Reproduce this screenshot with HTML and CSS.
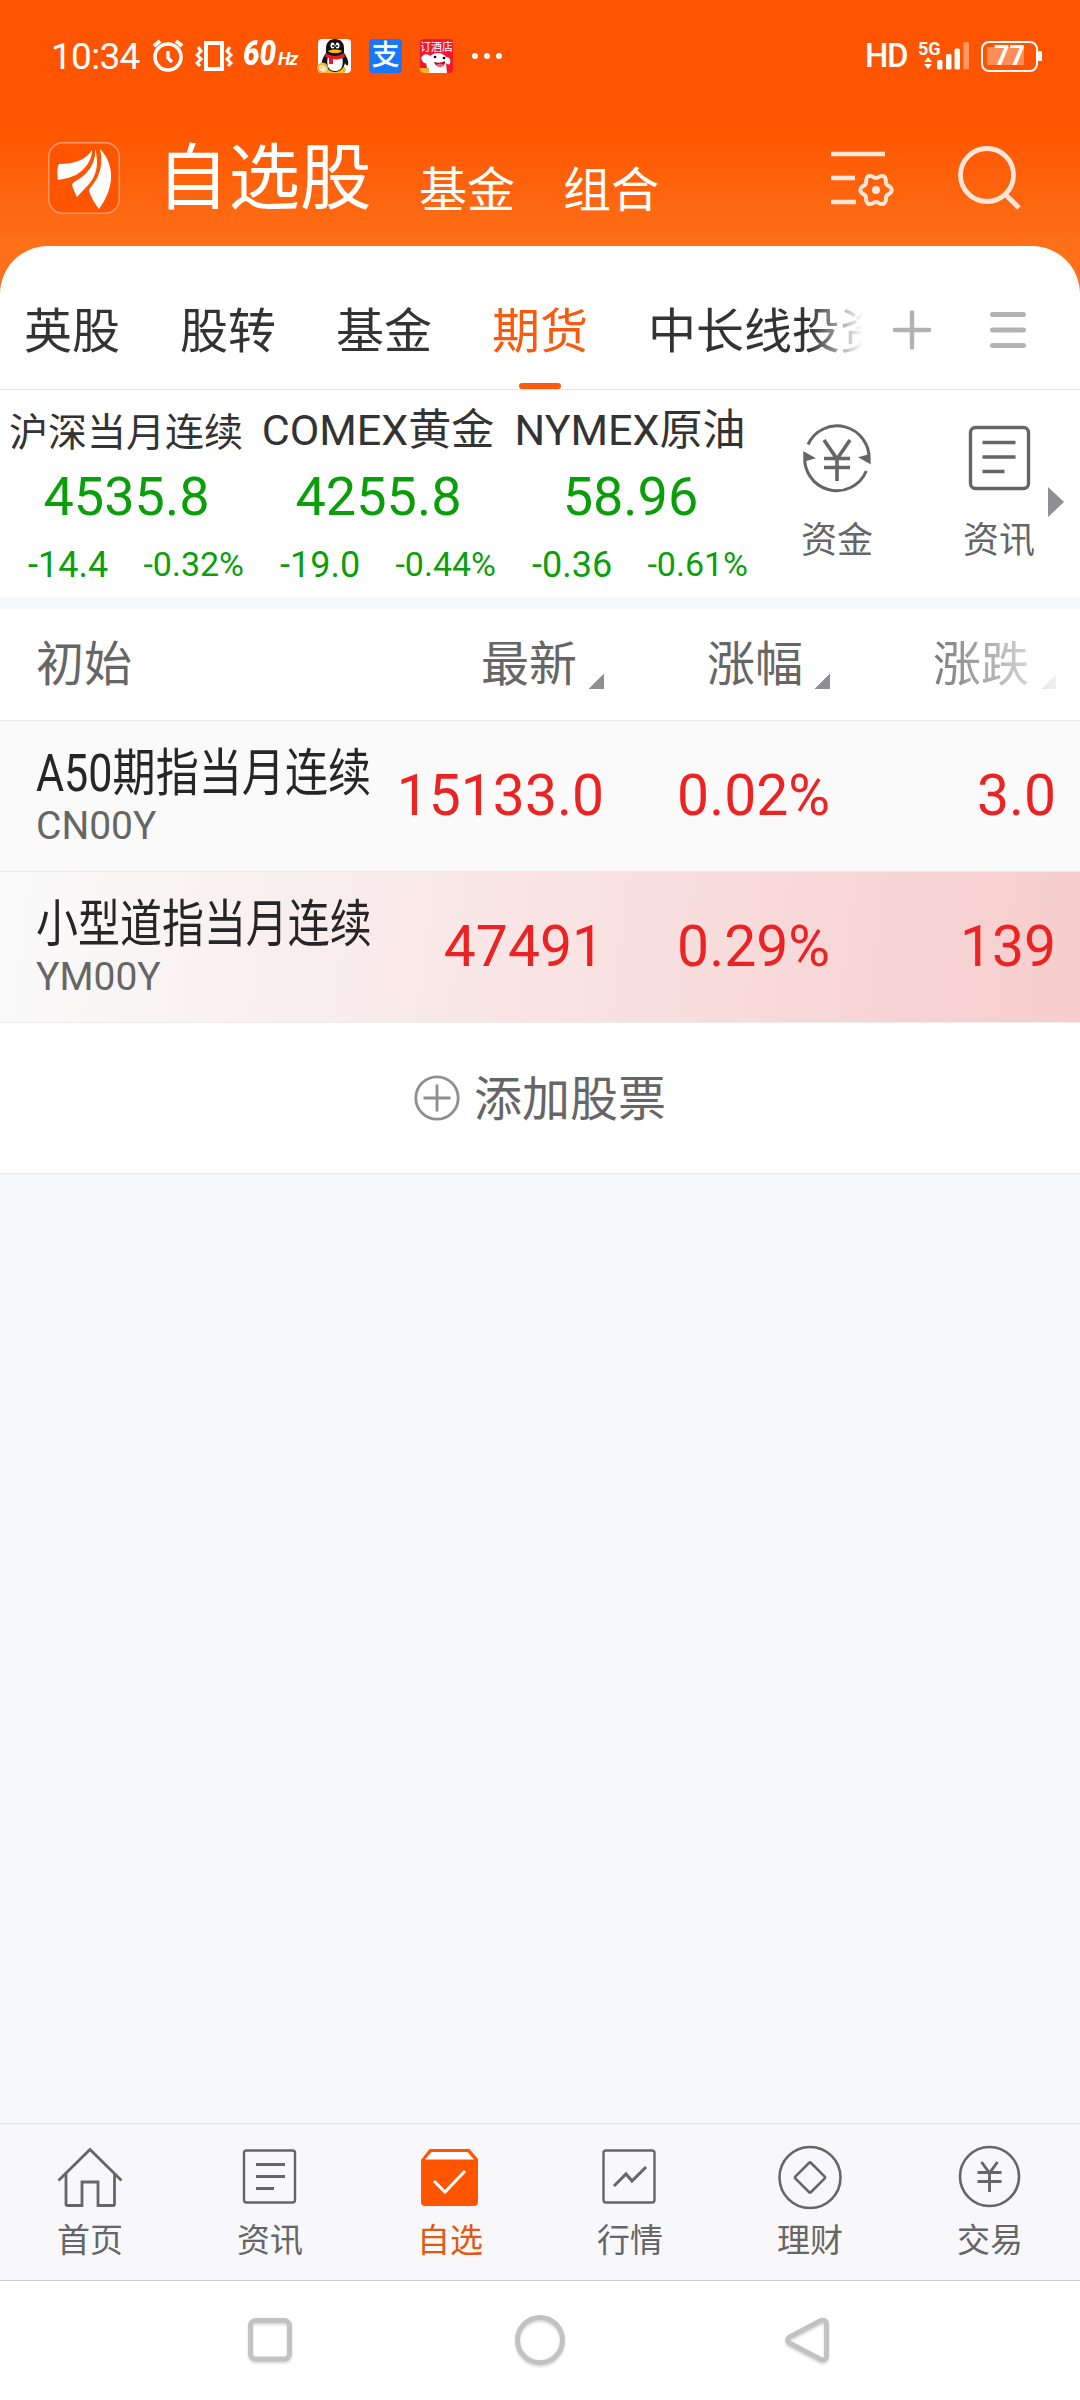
FILE: index.html
```html
<!DOCTYPE html>
<html lang="zh-CN">
<head>
  <meta charset="UTF-8">
  <meta name="viewport" content="width=device-width, initial-scale=1.0">
  <title>自选股</title>
  <link rel="stylesheet" href="styles.css">
</head>
<body>
  <div class="top">
    <div class="status-bar">
      <span class="time">10:34</span>
      <svg class="alarm" width="32" height="34" viewBox="0 0 32 34" fill="none" stroke="#fff">
        <circle cx="16" cy="18" r="13" stroke-width="3.6"/>
        <path d="M2 7l6-5M30 7l-6-5" stroke-width="4"/>
        <path d="M16 12v7l4 4" stroke-width="3.4"/>
      </svg>
      <svg class="vibrate" width="38" height="32" viewBox="0 0 38 32" fill="none" stroke="#fff" stroke-width="3">
        <path d="M11 3h16v26H11z" stroke-width="4"/>
        <path d="M3 7l3 4-4 4 4 4-4 4 3 3M35 7l-3 4 4 4-4 4 4 4-3 3"/>
      </svg>
      <span class="hz"><b>60</b><i>Hz</i></span>
      <svg class="app qq" width="35" height="34" viewBox="0 0 35 34">
        <rect x="1" width="33" height="34" rx="4" fill="#fff"/>
        <path d="M9 34c-4-3-1-7 2-7h13c4 0 7 4 3 7z" fill="#fcb813"/>
        <path d="M18 0c-6 0-9 4-9 9v5c-3 4-5 9-4 12 1 1 2 0 3-2 1 5 5 9 10 9s9-4 10-9c1 2 2 3 3 2 1-3-1-8-4-12V9c0-5-3-9-9-9z" fill="#111"/>
        <path d="M11 17h14c2 9 0 15-7 15s-9-6-7-15z" fill="#fff"/>
        <path d="M9 14c6 4 12 4 18 0l1 4c-4 2-8 3-12 2v5h-4v-6l-4-1z" fill="#e61b23"/>
        <ellipse cx="15.500" cy="6.500" rx="2" ry="3" fill="#fff"/>
        <ellipse cx="20.500" cy="6.500" rx="2" ry="3" fill="#fff"/>
        <circle cx="16" cy="7" r="1"/><circle cx="20" cy="7" r="1"/>
        <path d="M11 12c4-2 10-2 14 0-3 3-11 3-14 0z" fill="#fcb813"/>
        <circle cx="5.500" cy="29" r="5.500" fill="#f2b53c"/>
        <path d="M3 27h4v4H3zM5 29h4v3H5z" fill="none" stroke="#fff"/>
      </svg>
      <span class="app alipay">支</span>
      <span class="app hotel">
        <span class="hotel-text">订酒店</span>
        <svg width="33" height="20" viewBox="0 0 33 20">
          <path d="M1 5c3-5 7-4 9-2 5-4 12-4 16 1 4 0 5 3 4 7-2 1-3 0-4-1l1 10H8L6 10c-2 1-4-2-5-5z" fill="#fff"/>
          <circle cx="15" cy="4" r="1.300"/><circle cx="24" cy="5" r="1.300"/>
          <path d="M14 9c4 1 8 1 11-1 1 7-9 8-11 1z" fill="#a60d1c"/>
          <path d="M16 12c3-2 6-1 8 0-2 2-6 2-8 0z" fill="#ff6377"/>
          <path d="M0 15h9v5H0z" fill="#ffb12b"/>
        </svg>
      </span>
      <span class="more"><i></i><i></i><i></i></span>
      <span class="hd">HD</span>
      <svg class="signal" width="52" height="32" viewBox="0 0 52 32" fill="#fff">
        <text x="0" y="15" class="signal-text">5G</text>
        <path d="M6 22l4-5 4 5zM6 24l4 5 4-5z"/>
        <rect x="19" y="20" width="5.500" height="9.500" rx="1.500"/>
        <rect x="28" y="14" width="5.500" height="15.500" rx="1.500"/>
        <rect x="36.500" y="8.500" width="5.500" height="21" rx="1.500"/>
        <rect x="45.500" y="2" width="5.500" height="27.500" rx="1.500" opacity=".4"/>
      </svg>
      <span class="battery">77</span>
    </div>

    <div class="header">
      <svg class="logo" width="72" height="72" viewBox="0 0 72 72">
        <rect x=".75" y=".75" width="70.500" height="70.500" rx="14" fill="#ff5500" stroke="#ff9a66" stroke-width="1.500"/>
        <path d="M44 8c-6 10-18 14-33 14-2 4-2 9-1 16 7-1 13-3 18-5C38 27 44 18 44 8z" fill="#fff"/>
        <path d="M47 7c1 12-5 23-16 30-3 2-6 3-7 6 1 4 3 8 5 12l13-14c7-9 9-21 5-34z" fill="#fff"/>
        <path d="M52 7c3 12 1 24-6 34-2 3-4 4-5 8 2 6 6 13 10 18 8-11 13-24 12-36-1-10-5-18-11-24z" fill="#fff"/>
      </svg>
      <h1>自选股</h1>
      <span class="title-tab">基金</span>
      <span class="title-tab">组合</span>
      <svg class="manage" width="64" height="64" viewBox="0 0 64 64" fill="none" stroke="#ffe6d9" stroke-width="4.500">
        <path d="M0 7h54M0 31h24M0 55h25"/>
        <path d="M58.500 39.400Q63 43 58.500 46.600 54.100 48.200 54.900 52.900 54 58.600 48.600 56.500 45 53.500 41.400 56.500 36 58.600 35.100 52.900 35.900 48.200 31.500 46.600 27 43 31.500 39.400 35.900 37.800 35.100 33.100 36 27.400 41.400 29.500 45 32.500 48.600 29.500 54 27.400 54.900 33.100 54.100 37.800 58.500 39.400z" stroke-width="4"/>
        <circle cx="45" cy="43" r="4" fill="#ffe6d9" stroke="none"/>
      </svg>
      <svg class="search" width="64" height="64" viewBox="0 0 64 64" fill="none" stroke="#ffe6d9" stroke-width="4.800">
        <circle cx="30" cy="29" r="26.500"/>
        <path d="M48 48l14 14"/>
      </svg>
    </div>
  </div>

  <div class="sheet">
    <div class="tabs">
      <div class="tab-list">
        <span class="tab">英股</span>
        <span class="tab">股转</span>
        <span class="tab">基金</span>
        <span class="tab active">期货</span>
        <span class="tab">中长线投资</span>
      </div>
      <svg class="plus" width="40" height="40" viewBox="0 0 40 40" stroke="#b2b2b2" stroke-width="4.500" stroke-linecap="round">
        <path d="M20 2.500v35M3 20h34"/>
      </svg>
      <svg class="menu" width="36" height="40" viewBox="0 0 36 40" stroke="#b2b2b2" stroke-width="5" stroke-linecap="round">
        <path d="M2.500 4.500h31M2.500 20h31M2.500 35.500h31"/>
      </svg>
    </div>

    <div class="indices">
      <div class="index">
        <div class="index-name small">沪深当月连续</div>
        <div class="index-price">4535.8</div>
        <div class="index-change"><span>-14.4</span><small>-0.32%</small></div>
      </div>
      <div class="index">
        <div class="index-name">COMEX黄金</div>
        <div class="index-price">4255.8</div>
        <div class="index-change"><span>-19.0</span><small>-0.44%</small></div>
      </div>
      <div class="index">
        <div class="index-name">NYMEX原油</div>
        <div class="index-price">58.96</div>
        <div class="index-change"><span>-0.36</span><small>-0.61%</small></div>
      </div>
      <div class="shortcut">
        <svg width="70" height="70" viewBox="0 0 70 70" fill="none" stroke="#666" stroke-width="3">
          <path d="M6 21.500A32 32 0 0 1 67 37"/>
          <path d="M64.300 48A32 32 0 0 1 3.100 31"/>
          <path d="M68 40l-10-5.500 9-2.500zM2 29.500L12 35l-9 2.500z" fill="#666" stroke-width="1.500"/>
          <path d="M22 17l13 19 13-19M22 35.500h26M22 44.500h26M35 35v23" stroke-width="3.600"/>
        </svg>
        <span>资金</span>
      </div>
      <div class="shortcut">
        <svg width="70" height="70" viewBox="0 0 70 70" fill="none" stroke="#666" stroke-width="3.400">
          <rect x="6.500" y="4.500" width="58" height="61" rx="5"/>
          <path d="M18.500 19.500h33M18.500 34h33M18.500 48.500h22" stroke-width="3.600"/>
        </svg>
        <span>资讯</span>
      </div>
      <i class="next"></i>
    </div>

    <div class="stock-head">
      <span class="origin">初始</span>
      <span class="col">最新<i class="sort"></i></span>
      <span class="col">涨幅<i class="sort"></i></span>
      <span class="col fade">涨跌<i class="sort"></i></span>
    </div>

    <div class="stock">
      <div class="stock-name">
        <div class="name">A50期指当月连续</div>
        <div class="code">CN00Y</div>
      </div>
      <span class="num">15133.0</span>
      <span class="num">0.02%</span>
      <span class="num">3.0</span>
    </div>
    <div class="stock flash">
      <div class="stock-name">
        <div class="name narrow">小型道指当月连续</div>
        <div class="code">YM00Y</div>
      </div>
      <span class="num">47491</span>
      <span class="num">0.29%</span>
      <span class="num">139</span>
    </div>

    <div class="add-stock">
      <svg width="46" height="46" viewBox="0 0 46 46" fill="none" stroke="#8f8e94" stroke-width="2.800">
        <circle cx="23" cy="23" r="21.200"/>
        <path d="M23 9.500v27M9.500 23h27"/>
      </svg>
      <span>添加股票</span>
    </div>
  </div>

  <div class="bottom-nav">
    <div class="nav-item">
      <svg width="66" height="66" viewBox="0 0 66 66" fill="none" stroke="#666" stroke-width="2.800">
        <path d="M1.500 36.500L33 5.500l31.500 31M9 29v31q0 1.500 1.500 1.500H25V38h16v23.500h15q1.500 0 1.500-1.500V29"/>
      </svg>
      <span>首页</span>
    </div>
    <div class="nav-item">
      <svg width="66" height="66" viewBox="0 0 66 66" fill="none" stroke="#666" stroke-width="2.400">
        <rect x="7" y="6.500" width="51" height="52" rx="2.500"/>
        <path d="M19 20.500h29M19 32.500h29M19 44.500h18" stroke-width="3"/>
      </svg>
      <span>资讯</span>
    </div>
    <div class="nav-item active">
      <svg width="66" height="66" viewBox="0 0 66 66">
        <path d="M4 16L12.500 5h40L61 15v43q0 4-4 4H8q-4 0-4-4z" fill="#ff5500"/>
        <path d="M8 15.500L14.500 8h36l6.500 7.500z" fill="#fff"/>
        <path d="M17 37l11 11 20-21" fill="none" stroke="#fff" stroke-width="3"/>
      </svg>
      <span>自选</span>
    </div>
    <div class="nav-item">
      <svg width="66" height="66" viewBox="0 0 66 66" fill="none" stroke="#666" stroke-width="2.400">
        <rect x="6.500" y="6.500" width="51" height="52" rx="2.500"/>
        <path d="M17 42l12-12 6 7 14-14" stroke-width="3"/>
      </svg>
      <span>行情</span>
    </div>
    <div class="nav-item">
      <svg width="66" height="66" viewBox="0 0 66 66" fill="none" stroke="#666" stroke-width="2.600">
        <circle cx="33" cy="33.500" r="30.500"/>
        <rect x="22" y="22.500" width="22" height="22" rx="1.500" transform="rotate(45 33 33.500)"/>
      </svg>
      <span>理财</span>
    </div>
    <div class="nav-item">
      <svg width="66" height="66" viewBox="0 0 66 66" fill="none" stroke="#666" stroke-width="2.600">
        <circle cx="32.500" cy="32.500" r="29.500"/>
        <path d="M24.500 18l8 11 8-11M20.500 28.500h24M20.500 37.500h24M32.500 28v20" stroke-width="2.900"/>
      </svg>
      <span>交易</span>
    </div>
  </div>

  <div class="system-nav">
    <svg width="60" height="60" viewBox="0 0 60 60" fill="none" stroke="#c2c2c2" stroke-width="5">
      <rect x="10.500" y="10.500" width="39" height="38.500" rx="5"/>
    </svg>
    <svg width="60" height="60" viewBox="0 0 60 60" fill="none" stroke="#c2c2c2" stroke-width="5">
      <circle cx="30" cy="30" r="22.500"/>
    </svg>
    <svg width="60" height="60" viewBox="0 0 60 60" fill="none" stroke="#c2c2c2" stroke-width="5" stroke-linejoin="round">
      <path d="M41 10.500q5.500-1.500 5.500 4v31q0 5.500-5.500 4L9.500 33q-4-3 0-6z"/>
    </svg>
  </div>
</body>
</html>
```
FILE: styles.css
```css
* {
  box-sizing: border-box;
}

body {
  margin: 0;
  width: 1080px;
  height: 2400px;
  display: flex;
  flex-direction: column;
  overflow: hidden;
  background: #f7f8fa;
  color: #333;
  font-family: Roboto, "Noto Sans CJK SC", sans-serif;
  font-size: 48px;
}

svg {
  display: block;
  flex: none;
}

.top {
  height: 294px;
  margin-bottom: -48px;
  background: linear-gradient(#ff5500 125px, #ff7019 246px);
  color: #fff;
}

/* status bar */
.status-bar {
  display: flex;
  align-items: center;
  height: 112px;
  padding: 0 39px 0 51px;
}

.time {
  width: 101px;
  font-size: 37px;
  line-height: 44px;
  letter-spacing: -.7px;
  padding-top: 2px;
}

.vibrate {
  margin-left: 11px;
}

.hz {
  display: flex;
  align-items: baseline;
  width: 56px;
  margin-left: 10px;
  line-height: 40px;
  font-style: italic;
  font-weight: bold;
}

.hz b {
  width: 35px;
  font-size: 35px;
  transform: scaleX(.84);
  transform-origin: left;
}

.hz i {
  font-size: 18px;
  letter-spacing: -1px;
}

.app {
  flex: none;
  width: 33px;
  height: 34px;
  border-radius: 4px;
}

.qq {
  width: 35px;
  margin-left: 18px;
}

.alipay {
  margin-left: 17px;
  background: #1677ff;
  font-size: 28px;
  font-weight: 500;
  line-height: 33px;
  text-align: center;
}

.hotel {
  margin-left: 18px;
  background: #f5162d;
  overflow: hidden;
}

.hotel-text {
  display: block;
  height: 14px;
  font-size: 11px;
  line-height: 18px;
  white-space: nowrap;
}

.more {
  display: flex;
  gap: 6px;
  margin-left: 19px;
}

.more i {
  width: 6px;
  height: 6px;
  border-radius: 50%;
  background: #fff;
}

.hd {
  margin-left: auto;
  font-size: 33px;
  font-weight: 500;
  line-height: 40px;
  letter-spacing: -1.5px;
}

.signal {
  margin-left: 11px;
}

.signal-text {
  font-size: 18px;
  font-weight: bold;
}

.battery {
  position: relative;
  width: 57px;
  height: 31px;
  margin: 0 3px 0 11px;
  border: 2.5px solid #fff;
  border-radius: 8px;
  background: linear-gradient(#ff8d55, #ff8d55) 4px 4px / 37px 18px no-repeat;
  font-size: 27px;
  font-weight: bold;
  line-height: 27px;
  text-align: center;
}

.battery::after {
  content: "";
  position: absolute;
  right: -6px;
  top: 8px;
  width: 4px;
  height: 10px;
  background: #fff;
}

/* header */
.header {
  display: flex;
  align-items: center;
  height: 132px;
  padding: 0 59px 0 48px;
}

h1 {
  margin: 2px 0 0 37px;
  width: 215px;
  font-size: 71.5px;
  font-weight: 400;
  line-height: 84px;
}

.title-tab {
  width: 96px;
  margin: 25px 0 0 48px;
  line-height: 60px;
}

.title-tab:nth-of-type(1) {
  margin-left: 47px;
}

.manage {
  margin: 2px 0 0 auto;
}

.search {
  margin-left: 62px;
}

/* sheet */
.sheet {
  flex: none;
  border-radius: 48px 48px 0 0;
  border-bottom: 1px solid #e8e8ea;
  background: #fff;
}

.tabs {
  display: flex;
  align-items: center;
  height: 144px;
  padding: 24px 54px 0 24px;
  border-bottom: 1px solid #e5e5e5;
}

.tab-list {
  display: flex;
  gap: 60px;
  width: 839px;
  margin-right: 29px;
  overflow: hidden;
  white-space: nowrap;
  -webkit-mask-image: linear-gradient(90deg, #000 785px, transparent 839px);
  mask-image: linear-gradient(90deg, #000 785px, transparent 839px);
}

.tab {
  flex: none;
  height: 119px;
  line-height: 124px;
}

.tab.active {
  position: relative;
  color: #f95a0e;
}

.tab.active::after {
  content: "";
  position: absolute;
  left: 27px;
  bottom: 0;
  width: 42px;
  height: 6px;
  border-radius: 3px;
  background: #f95a0e;
}

.menu {
  margin-left: 58px;
}

.indices {
  display: flex;
  position: relative;
  height: 219px;
  border-bottom: 12px solid #f7f8fa;
}

.index {
  width: 252px;
  color: #0b9f0b;
  text-align: center;
  white-space: nowrap;
}

.index-name {
  height: 62px;
  color: #333;
  font-size: 43px;
  line-height: 80px;
}

.index-name.small {
  font-size: 39px;
  line-height: 86px;
}

.index-price {
  height: 82px;
  padding-left: 1px;
  color: #0a9e0a;
  font-size: 54px;
  line-height: 89px;
}

.index-change {
  display: flex;
  align-items: baseline;
  justify-content: space-between;
  padding: 0 8px 0 28px;
  font-size: 36px;
  line-height: 63px;
}

.index-change small {
  position: relative;
  top: -1px;
  font-size: 34px;
}

.shortcut {
  display: flex;
  flex-direction: column;
  align-items: center;
  width: 162px;
  padding-top: 33px;
  color: #666;
  font-size: 36px;
}

.shortcut span {
  margin-top: 22px;
  line-height: 52px;
}

.next {
  position: absolute;
  left: 1048px;
  top: 97px;
  border: 15px solid transparent;
  border-left: 16px solid #8f8e94;
  border-right: 0;
}

/* stock list */
.stock-head,
.stock {
  display: grid;
  grid-template-columns: 342px 226px 226px 226px;
  padding-left: 36px;
}

.stock-head {
  height: 111px;
  color: #666;
  line-height: 112px;
}

.col {
  display: flex;
  justify-content: flex-end;
}

.sort {
  margin: 65px 0 0 12px;
  width: 15px;
  height: 15px;
  background: linear-gradient(135deg, transparent 50%, #8f8e94 50%);
}

.fade {
  -webkit-mask-image: linear-gradient(90deg, #000 80px, rgba(0, 0, 0, .12));
  mask-image: linear-gradient(90deg, #000 80px, rgba(0, 0, 0, .12));
}

.stock {
  height: 151px;
  border-top: 1px solid #ebebeb;
  background: #fafafa;
}

.stock.flash {
  background: linear-gradient(97deg, #fafafa 2%, #f9e3e3 52%, #f7cccc);
}

.name {
  height: 69px;
  color: #262626;
  font-size: 51px;
  line-height: 106px;
  white-space: nowrap;
  transform: scaleX(.845);
  transform-origin: left;
}

.name.narrow {
  transform: scaleX(.823);
}

.code {
  color: #666;
  font-size: 39px;
  line-height: 72px;
}

.num {
  color: #eb2323;
  font-size: 57px;
  line-height: 149px;
  text-align: right;
}

.add-stock {
  display: flex;
  align-items: center;
  justify-content: center;
  gap: 14px;
  height: 151px;
  border-top: 1px solid #ebebeb;
  color: #666;
}

.add-stock span {
  line-height: 60px;
  padding-top: 3px;
}

/* bottom bars */
.bottom-nav {
  display: flex;
  height: 158px;
  margin-top: auto;
  border-top: 1px solid #e0e2e4;
  border-bottom: 1px solid #c9cacc;
  background: #f8f8fa;
}

.nav-item {
  display: flex;
  flex-direction: column;
  align-items: center;
  width: 180px;
  padding-top: 20px;
  color: #666;
  font-size: 33px;
}

.nav-item span {
  line-height: 62px;
}

.nav-item.active {
  color: #e05a14;
}

.system-nav {
  display: flex;
  justify-content: center;
  gap: 210px;
  height: 119px;
  padding-top: 29px;
  background: #fff;
}

.system-nav svg {
  filter: drop-shadow(0 2px 1px rgba(0, 0, 0, .15));
}
```
